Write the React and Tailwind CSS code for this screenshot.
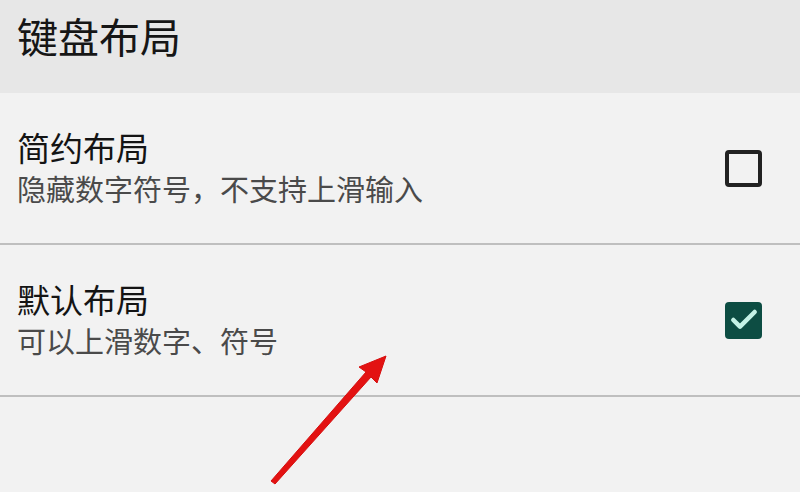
import { Check } from 'lucide-react';

const rows = [
    { title: '简约布局', desc: '隐藏数字符号，不支持上滑输入', checked: false },
    { title: '默认布局', desc: '可以上滑数字、符号', checked: true },
];

function Box({ checked }) {
    if (checked) {
        return (
            <div className="w-[37px] h-[37px] rounded-[4px] bg-[#0d4d43] flex items-center justify-center">
                <Check size={32} strokeWidth={3.4} className="text-[#c4f2e6]" />
            </div>
        );
    }
    return <div className="w-[37px] h-[37px] rounded-[4px] border-[4px] border-[#222]" />;
}

export default function App() {
    return (
        <div className="relative w-[800px] h-[492px] overflow-hidden bg-[#f2f2f2] font-['Noto_Sans_CJK_SC',sans-serif]">
            <div className="h-[93px] bg-[#e7e7e7] px-[17px] pt-[7px]">
                <h1 className="text-[41px] leading-[56px] text-[#161616]">键盘布局</h1>
            </div>
            {rows.map(row => (
                <div key={row.title} className="h-[152px] border-b-2 border-[#bfbfbf] flex items-center justify-between pl-[17px] pr-[38px]">
                    <div className="pb-[4px]">
                        <div className="text-[33px] leading-[44px] text-[#141414]">{row.title}</div>
                        <div className="text-[29px] leading-[38px] text-[#4a4a4a]">{row.desc}</div>
                    </div>
                    <Box checked={row.checked} />
                </div>
            ))}
            {/* red arrow drawn over the screenshot */}
            <svg className="absolute left-0 top-0" width="800" height="492" viewBox="0 0 800 492">
                <path d="M271 481 L366 372 L359 367 L386 356 L377 383 L371 377 L275 484 Z" fill="#e31212" stroke="#d61010" strokeWidth="1" strokeLinejoin="round" />
            </svg>
        </div>
    );
}
